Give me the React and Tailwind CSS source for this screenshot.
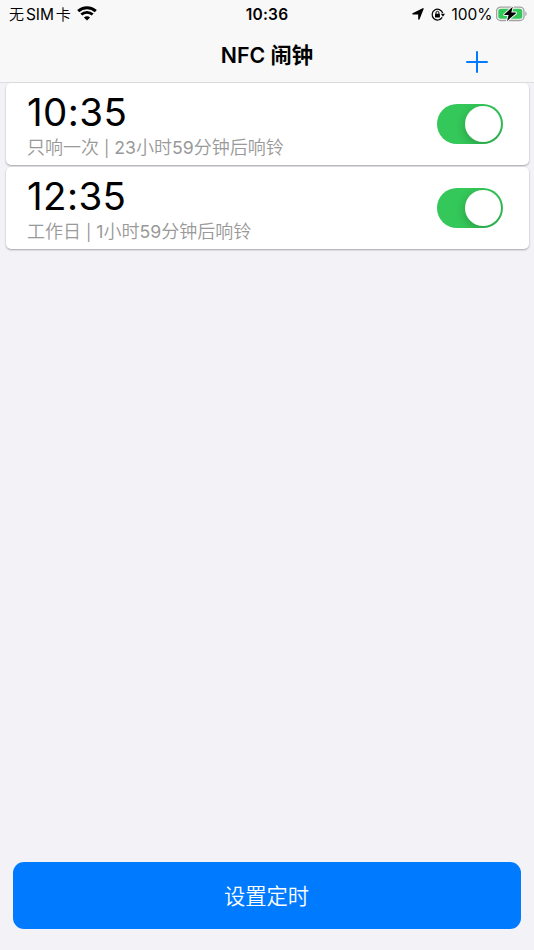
import { useState } from 'react';

const initialAlarms = [
  { id: 1, time: '10:35', repeat: '只响一次', hours: 23, minutes: 59, enabled: true },
  { id: 2, time: '12:35', repeat: '工作日', hours: 1, minutes: 59, enabled: true },
];

const WifiIcon = () => (
  <svg width="20" height="15" viewBox="0 0 20 15" fill="none" stroke="#000">
    <path d="M1.2 5.1C6 .6 14 .6 18.8 5.1" strokeWidth="3" />
    <path d="M4.3 8.6C7.5 5.6 12.5 5.6 15.7 8.6" strokeWidth="2.7" />
    <path d="M10 14.5 6.9 11.4C8.6 9.9 11.4 9.9 13.1 11.4Z" fill="#000" stroke="none" />
  </svg>
);

const LocationIcon = () => (
  <svg width="12" height="12" viewBox="0 0 12 12">
    <path
      d="M11 .8 6.9 11V5.8H.9Z"
      fill="#000"
      stroke="#000"
      strokeWidth="1.4"
      strokeLinejoin="round"
    />
  </svg>
);

const RotationLockIcon = () => (
  <svg width="14" height="13" viewBox="0 0 14 13" fill="none" stroke="#000">
    <path d="M11.2 9.4A5.4 5.4 0 1 1 11.7 5" strokeWidth="1.2" />
    <path d="M9.8 5.7H14L11.9 8.7Z" fill="#000" stroke="none" />
    <rect x="4" y="5.7" width="4.9" height="3.8" rx=".5" fill="#000" stroke="none" />
    <path d="M5 6V4.8a1.45 1.45 0 0 1 2.9 0V6" strokeWidth="1" />
  </svg>
);

const BatteryIcon = () => (
  <svg width="32" height="16" viewBox="0 0 32 16">
    <rect x=".6" y="1.1" width="27.4" height="13.4" rx="4" fill="none" stroke="#a3a3a3" strokeWidth="1.3" />
    <rect x="2.3" y="2.8" width="24" height="10" rx="2.5" fill="#34c759" />
    <path d="M29.3 5.5c1.8.7 1.8 3.9 0 4.6Z" fill="#a3a3a3" />
    <path
      d="M16.7.8 8.4 8.3Q7.9 9.1 8.8 9.1H12.6L11 14.9 19.8 7.5Q20.3 6.6 19.4 6.6H15.3Z"
      fill="#000"
      stroke="#f8f8f8"
      strokeWidth="2"
      paintOrder="stroke"
    />
  </svg>
);

const StatusBar = () => (
  <div className="grid h-7 grid-cols-[1fr_auto_1fr] items-start leading-7">
    <div className="flex h-7 items-center pl-[9px]">
      <span className="pt-[2px] text-[15px] font-[350]">无</span>
      <span className="ml-[2px] pt-[2px] text-[15.5px] tracking-[-0.1px]">SIM</span>
      <span className="ml-[2px] pt-[2px] text-[15px] font-[350]">卡</span>
      <span className="ml-[6px] mb-[2px]">
        <WifiIcon />
      </span>
    </div>
    <div className="pt-px text-[15.5px] font-semibold tracking-[0.2px]">10:36</div>
    <div className="flex h-7 items-center justify-end pr-[6px]">
      <LocationIcon />
      <span className="ml-[7px]">
        <RotationLockIcon />
      </span>
      <span className="ml-[6px] mr-[3.5px] pt-[2px] text-[15.5px]">100%</span>
      <span className="mb-px">
        <BatteryIcon />
      </span>
    </div>
  </div>
);

const Toggle = ({ checked, onChange }) => (
  <button
    type="button"
    role="switch"
    aria-checked={checked}
    onClick={onChange}
    className={`flex h-10 w-[66px] items-center overflow-hidden rounded-full px-[2px] ${
      checked ? 'justify-end bg-[#34c759]' : 'justify-start bg-[#e9e9ea]'
    }`}
  >
    <span className="h-9 w-9 rounded-full bg-white shadow-[0_3px_10px_rgba(0,0,0,0.22)]" />
  </button>
);

const AlarmCard = ({ alarm, onToggle }) => (
  <div className="flex h-[82px] items-center justify-between rounded-[5px] bg-white pl-[21.5px] pr-[25.5px] shadow-[0_1px_2px_rgba(0,0,0,0.32)]">
    <div className="pt-[2px]">
      <div className="text-[38.5px] leading-[45px] tracking-[0.4px]">{alarm.time}</div>
      <div className="flex whitespace-nowrap pt-px text-[18px] font-[350] leading-6 text-[#999]">
        <span>{alarm.repeat}</span>
        <span className="mx-[5px] text-[16px] font-normal">|</span>
        <span>
          <span className="text-[17.7px] font-normal">{alarm.hours}</span>小时
          <span className="text-[17.7px] font-normal">{alarm.minutes}</span>分钟后响铃
        </span>
      </div>
    </div>
    <Toggle checked={alarm.enabled} onChange={onToggle} />
  </div>
);

export default function App() {
  const [alarms, setAlarms] = useState(initialAlarms);

  const toggleAlarm = (id) => {
    setAlarms(alarms.map((a) => (a.id === id ? { ...a, enabled: !a.enabled } : a)));
  };

  return (
    <div className="flex h-screen flex-col bg-[#f2f2f7] font-['Inter','Noto_Sans_CJK_SC',sans-serif] text-black">
      <header className="h-[83px] border-b border-[#dededf] bg-[#f8f8f8]">
        <StatusBar />
        <div className="grid h-[54px] grid-cols-[1fr_auto_1fr] items-center">
          <h1 className="col-start-2 text-[21.3px] font-semibold leading-[54px]">
            NFC 闹钟
          </h1>
          <button type="button" aria-label="添加" className="mr-[46px] mt-[14px] justify-self-end">
            <svg width="22" height="22" viewBox="0 0 22 22" stroke="#007aff" strokeWidth="2" strokeLinecap="round">
              <path d="M11 1v20M1 11h20" />
            </svg>
          </button>
        </div>
      </header>

      <main className="flex flex-1 flex-col gap-[2px] px-[5.5px]">
        {alarms.map((alarm) => (
          <AlarmCard key={alarm.id} alarm={alarm} onToggle={() => toggleAlarm(alarm.id)} />
        ))}
      </main>

      <footer className="px-[13px] pb-[21px]">
        <button type="button" className="h-[67px] w-full rounded-[11px] bg-[#007aff] pr-px pt-[2px] text-[21.3px] font-[350] text-white">
          设置定时
        </button>
      </footer>
    </div>
  );
}
